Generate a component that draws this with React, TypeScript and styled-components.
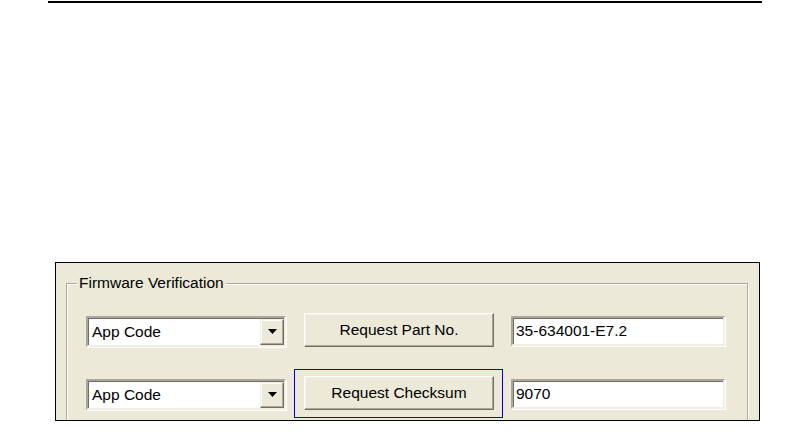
import React from "react";
import styled, { createGlobalStyle } from "styled-components";

const GlobalStyle = createGlobalStyle`
  html, body {
    margin: 0;
    padding: 0;
    background: #fff;
  }
  body {
    font-family: "Liberation Sans", Arial, sans-serif;
    color: #000;
  }
`;

const Page = styled.div`
  width: 810px;
  height: 446px;
  padding-top: 1px;
  box-sizing: border-box;
  overflow: hidden;
`;

const Rule = styled.div`
  margin-left: 48px;
  width: 714px;
  height: 2px;
  background: #000;
`;

const Panel = styled.div`
  margin: 259px 0 0 55px;
  width: 705px;
  height: 159px;
  box-sizing: border-box;
  border: 1px solid #000;
  background: #ece9d8;
  padding: 20px 11px 0 10px;
  overflow: hidden;
`;

const GroupBox = styled.div`
  position: relative;
  border: 1px solid #aca899;
  box-shadow: 1px 1px 0 #fff, inset 1px 1px 0 #fff;
  padding: 29px 19px 20px 19px;
  display: flex;
  flex-direction: column;
  gap: 29px;
`;

const Legend = styled.span`
  position: absolute;
  top: -10px;
  left: 10px;
  padding: 0 2px;
  background: #ece9d8;
  font-size: 15.5px;
  line-height: 18px;
`;

const Row = styled.div`
  display: flex;
  align-items: flex-end;
`;

const Sunken = styled.div`
  box-sizing: border-box;
  background: #fff;
  border-style: solid;
  border-width: 2px;
  border-color: #aca899 #f1efe2 #f1efe2 #aca899;
  box-shadow: inset 1px 1px 0 #716f64, 1px 1px 0 #fff;
  font-size: 15.5px;
  display: flex;
  align-items: center;
`;

const Combo = styled(Sunken)`
  width: 200px;
  height: 31px;
  padding-left: 4px;
  justify-content: space-between;
`;

const DropButton = styled.div`
  box-sizing: border-box;
  width: 24px;
  height: 26px;
  background: #ece9d8;
  border-style: solid;
  border-width: 1px;
  border-color: #f1efe2 #716f64 #716f64 #f1efe2;
  box-shadow: inset -1px -1px 0 #aca899, inset 1px 1px 0 #fff;
  display: flex;
  align-items: center;
  justify-content: center;
`;

const Field = styled(Sunken)<{ $width: number }>`
  width: ${(p) => p.$width}px;
  height: 30px;
  padding-left: 3px;
  margin-left: 17px;
  margin-bottom: 1px;
`;

const Button = styled.div<{ $focused?: boolean }>`
  position: relative;
  box-sizing: border-box;
  width: 190px;
  height: 34px;
  margin-left: 18px;
  background: #ece9d8;
  border-style: solid;
  border-width: 1px;
  border-color: #fff #716f64 #716f64 #fff;
  box-shadow: inset -1px -1px 0 #aca899, inset 1px 1px 0 #f1efe2;
  font-size: 15.5px;
  display: flex;
  align-items: center;
  justify-content: center;
  &::before {
    content: "";
    display: ${(p) => (p.$focused ? "block" : "none")};
    position: absolute;
    top: -8px;
    left: -11px;
    right: -10px;
    bottom: -9px;
    border: 1px solid #0000ff;
  }
`;

const Arrow = () => (
  <svg width="9" height="5" viewBox="0 0 9 5">
    <path d="M0 0h9L4.5 5z" fill="#000" />
  </svg>
);

const rows = [
  { label: "Request Part No.", value: "35-634001-E7.2", focused: false },
  { label: "Request Checksum", value: "9070", focused: true },
];

export default function App() {
  return (
    <>
      <GlobalStyle />
      <Page>
        <Rule />
        <Panel>
          <GroupBox>
            <Legend>Firmware Verification</Legend>
            {rows.map((r) => (
              <Row key={r.label}>
                <Combo>
                  <span>App Code</span>
                  <DropButton>
                    <Arrow />
                  </DropButton>
                </Combo>
                <Button $focused={r.focused}>{r.label}</Button>
                <Field $width={214}>{r.value}</Field>
              </Row>
            ))}
          </GroupBox>
        </Panel>
      </Page>
    </>
  );
}
